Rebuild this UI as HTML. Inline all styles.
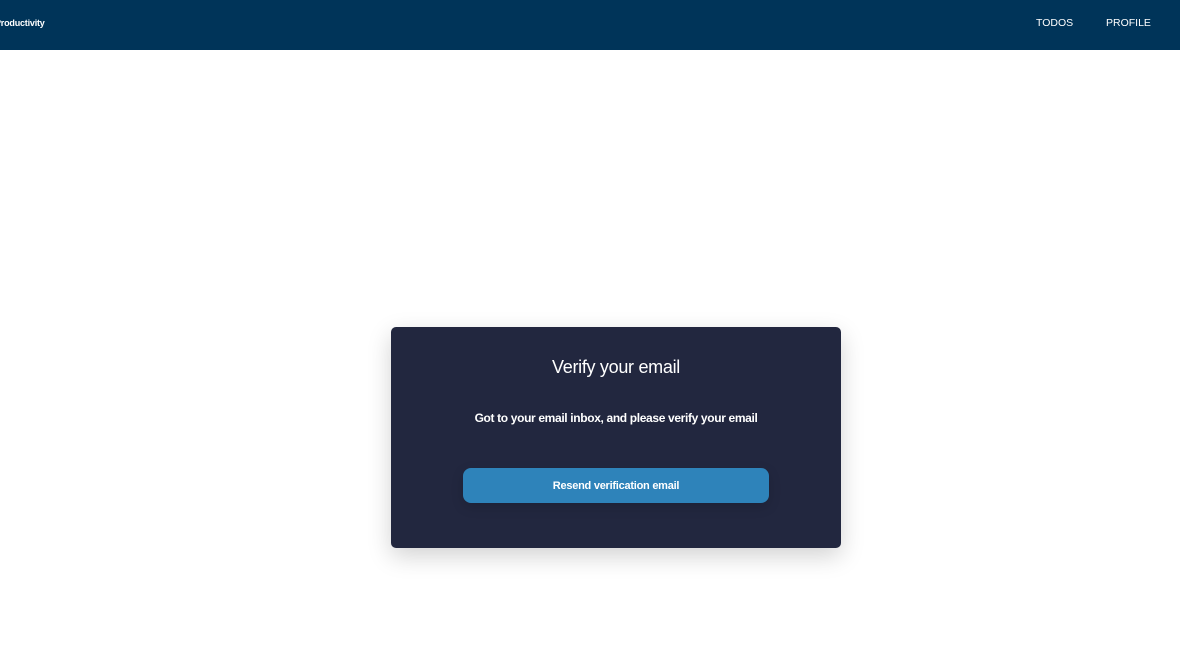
<!DOCTYPE html>
<html><head><style>
html,body{margin:0;padding:0;width:1180px;height:659px;background:#fff;overflow:hidden;font-family:"Liberation Sans",sans-serif}
.nav{position:absolute;left:0;top:0;width:1180px;height:50px;background:#003459}
.brand{position:absolute;left:-5px;top:18px;color:#fff;font-size:9px;font-weight:bold;letter-spacing:-0.2px}
.nav a{position:absolute;top:17px;color:#fff;font-size:10.5px;text-decoration:none}
.card{position:absolute;left:391px;top:327px;width:450px;height:221px;background:#22273f;border-radius:5px;box-shadow:0 8px 24px rgba(0,0,0,0.18)}
h1{position:absolute;left:0;width:450px;top:30px;margin:0;text-align:center;color:#fff;font-weight:normal;font-size:18px;letter-spacing:-0.3px}
p{position:absolute;left:0;width:450px;top:84px;margin:0;text-align:center;color:#fff;font-weight:bold;font-size:12px;letter-spacing:-0.35px}
.btn{position:absolute;left:72px;top:141px;width:306px;height:35px;background:#2e83ba;border-radius:8px;color:#fff;font-weight:bold;font-size:11px;text-align:center;line-height:36px;letter-spacing:-0.25px;box-shadow:0 4px 12px rgba(0,0,0,0.15)}
</style></head><body>
<div class="nav"><div class="brand">Productivity</div><a style="left:1036px">TODOS</a><a style="left:1106px">PROFILE</a></div>
<div class="card"><h1>Verify your email</h1><p>Got to your email inbox, and please verify your email</p><div class="btn">Resend verification email</div></div>
</body></html>
